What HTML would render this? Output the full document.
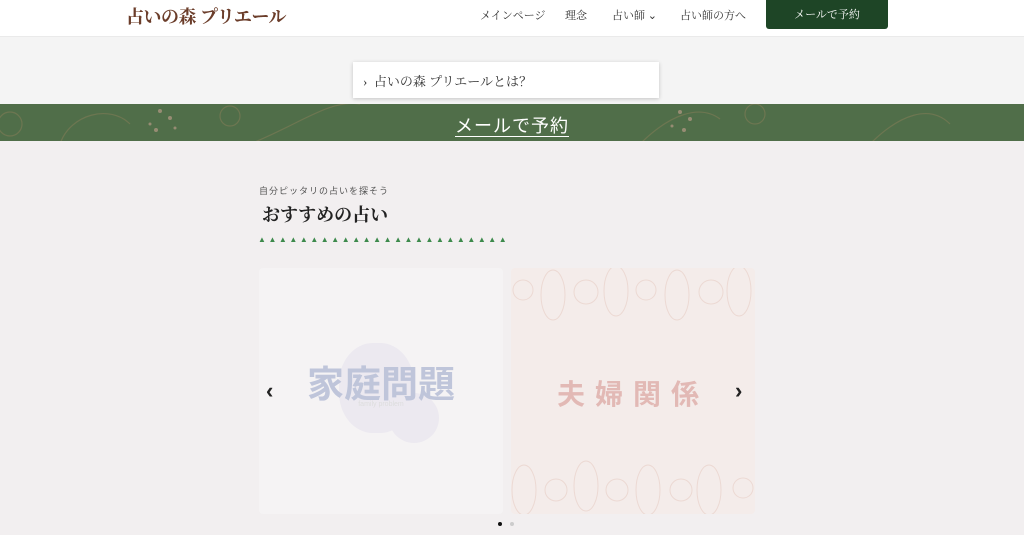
<!DOCTYPE html>
<html><head><meta charset="utf-8"><style>
*{margin:0;padding:0;box-sizing:border-box}
body{width:1024px;height:535px;overflow:hidden;background:#f2eff0;font-family:"Liberation Serif","Noto Serif CJK SC",serif;position:relative}
.hdr{position:absolute;left:0;top:0;width:1024px;height:36px;background:#fff}
.logo{position:absolute;left:126px;top:3px;font-size:18px;color:#6b3d2a;font-weight:bold;letter-spacing:-0.5px}
.nav{position:absolute;top:7px;font-size:11px;color:#333}
.btn{position:absolute;left:766px;top:0;width:122px;height:29px;background:#1e4526;color:#fff;font-size:11px;text-align:center;line-height:30px;border-radius:0 0 3px 3px}
.gray{position:absolute;left:0;top:36px;width:1024px;height:68px;background:#f4f4f4;border-top:1px solid #eaeaea}
.toc{position:absolute;left:353px;top:62px;width:306px;height:36px;background:#fff;box-shadow:0 1px 4px rgba(0,0,0,.2);font-size:13px;color:#333;padding:9px 0 0 10px}
.green{position:absolute;left:0;top:104px;width:1024px;height:37px;background:#506e49;overflow:hidden}
.green .t{position:absolute;left:0;width:1024px;top:8px;text-align:center;color:#fff;font-size:18px;font-family:"Liberation Sans","Noto Sans CJK JP",sans-serif;text-decoration:underline;text-underline-offset:4px;letter-spacing:1px}
.sub{position:absolute;left:259px;top:184px;font-size:9px;color:#555;font-family:"Liberation Sans","Noto Sans CJK JP",sans-serif;letter-spacing:1px}
.h2{position:absolute;left:262px;top:201px;font-size:18px;color:#222;font-weight:bold}
.trees{position:absolute;left:258px;top:235px;font-size:8px;color:#3d8a4c;letter-spacing:2.55px;white-space:nowrap}
.card{position:absolute;top:268px;width:244px;height:246px;border-radius:4px}
.c1{left:259px;background:#f5f3f4}
.c2{left:511px;background:#f4ecea}
.arr{position:absolute;top:378px;font-size:22px;font-weight:bold;color:#222;font-family:"Liberation Sans",sans-serif}
</style></head><body>
<div class="hdr"></div>
<div class="logo">占いの森 プリエール</div>
<div class="nav" style="left:480px">メインページ</div>
<div class="nav" style="left:565px">理念</div>
<div class="nav" style="left:612px">占い師 ⌄</div>
<div class="nav" style="left:680px">占い師の方へ</div>
<div class="btn">メールで予約</div>
<div class="gray"></div>
<div class="toc">› &nbsp;占いの森 プリエールとは？</div>
<div class="green">
<svg width="1024" height="37" style="position:absolute;left:0;top:0" fill="none" stroke="#7a7a55" stroke-width="1.2" opacity=".7">
<path d="M60 40 C70 10 110 0 130 20"/><path d="M250 40 C300 20 330 -5 360 0"/><path d="M640 40 C670 10 700 0 720 15"/><path d="M870 40 C900 10 930 0 950 20"/>
<circle cx="230" cy="12" r="10"/><circle cx="10" cy="20" r="12"/><circle cx="755" cy="10" r="10"/>
<g fill="#b59a86" stroke="none"><circle cx="160" cy="7" r="2"/><circle cx="170" cy="14" r="2"/><circle cx="150" cy="20" r="1.5"/><circle cx="156" cy="26" r="2"/><circle cx="175" cy="24" r="1.5"/><circle cx="680" cy="8" r="2"/><circle cx="690" cy="15" r="2"/><circle cx="672" cy="22" r="1.5"/><circle cx="684" cy="26" r="2"/></g>
</svg>
<div class="t">メールで予約</div></div>
<div class="sub">自分ピッタリの占いを探そう</div>
<div class="h2">おすすめの占い</div>
<div class="trees">▲▲▲▲▲▲▲▲▲▲▲▲▲▲▲▲▲▲▲▲▲▲▲▲</div>
<div class="card c1">
<div style="position:absolute;left:80px;top:75px;width:75px;height:90px;border-radius:45%;background:#ece9f0"></div>
<div style="position:absolute;left:130px;top:125px;width:50px;height:50px;border-radius:50%;background:#ece9f0"></div>
<div style="position:absolute;left:0;width:244px;top:86px;text-align:center;font-size:37px;font-weight:bold;color:#bfc5da;font-family:'Noto Sans CJK JP',sans-serif">家庭問題</div>
<div style="position:absolute;left:0;width:244px;top:133px;text-align:center;font-size:7px;color:#ddd;font-family:'Liberation Sans',sans-serif">family problem</div>
</div>
<div class="card c2">
<svg width="244" height="246" style="position:absolute;left:0;top:0" fill="none" stroke="#ecd9d3" stroke-width="1">
<g><ellipse cx="42" cy="27" rx="12" ry="25"/><ellipse cx="105" cy="23" rx="12" ry="25"/><ellipse cx="166" cy="27" rx="12" ry="25"/><ellipse cx="228" cy="23" rx="12" ry="25"/><circle cx="12" cy="22" r="10"/><circle cx="75" cy="24" r="12"/><circle cx="135" cy="22" r="10"/><circle cx="200" cy="24" r="12"/></g>
<g><ellipse cx="13" cy="222" rx="12" ry="25"/><ellipse cx="75" cy="218" rx="12" ry="25"/><ellipse cx="137" cy="222" rx="12" ry="25"/><ellipse cx="198" cy="222" rx="12" ry="25"/><circle cx="45" cy="222" r="11"/><circle cx="106" cy="222" r="11"/><circle cx="170" cy="222" r="11"/><circle cx="232" cy="220" r="10"/></g>
</svg>
<div style="position:absolute;left:46px;top:105px;font-size:28px;color:#e2b9b5;letter-spacing:10px;font-weight:bold;font-family:'Noto Sans CJK JP',sans-serif">夫婦関係</div>
</div>
<div class="arr" style="left:266px">‹</div>
<div class="arr" style="left:735px">›</div>
<div style="position:absolute;left:498px;top:522px;width:4px;height:4px;border-radius:50%;background:#111"></div>
<div style="position:absolute;left:510px;top:522px;width:4px;height:4px;border-radius:50%;background:#ccc"></div>
</body></html>
